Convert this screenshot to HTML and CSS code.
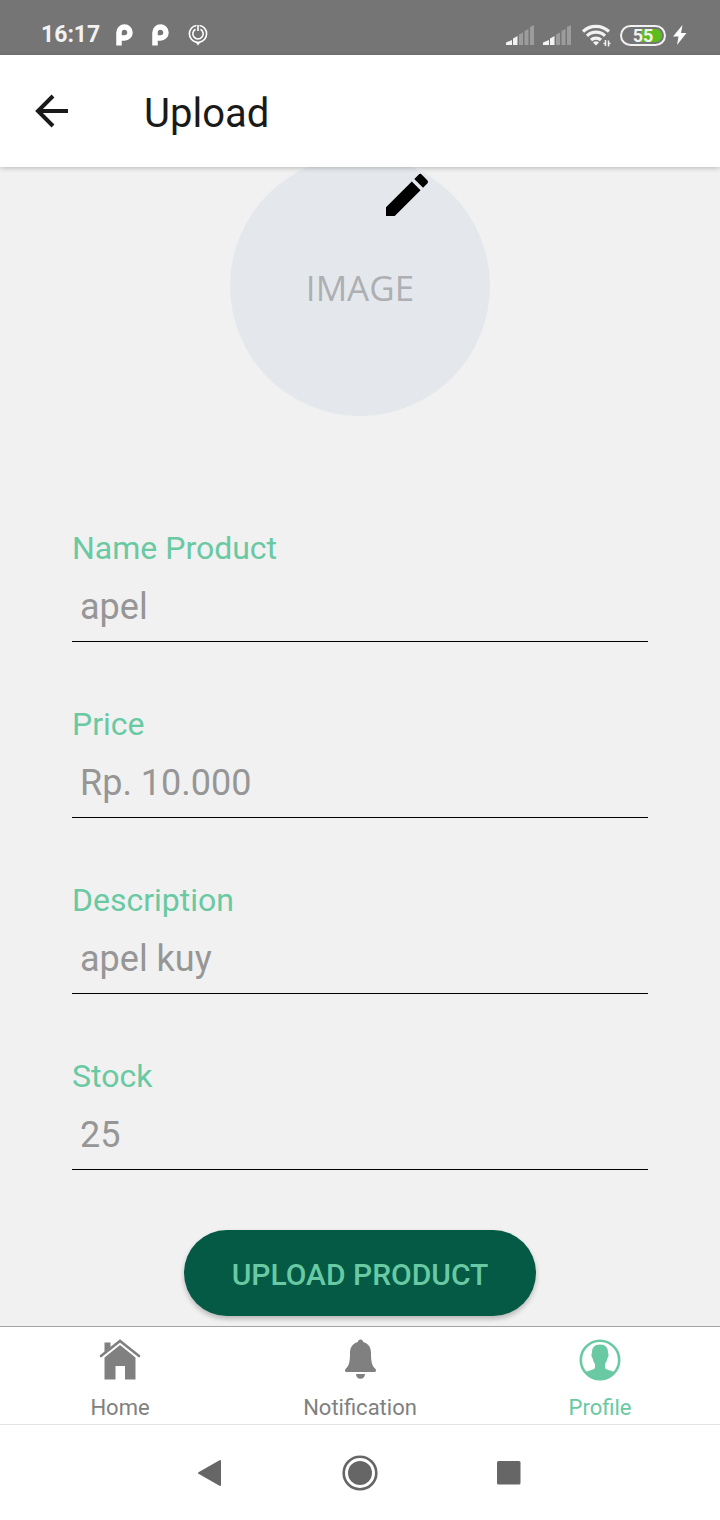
FILE: index.html
```html
<!DOCTYPE html>
<html lang="en">
<head>
<meta charset="utf-8">
<meta name="viewport" content="width=device-width, initial-scale=1">
<title>Upload</title>
<link rel="stylesheet" href="styles.css">
</head>
<body>
<div class="app">
  <div class="status">
    <div class="status-left">
      <time class="clock">16:17</time>
      <svg class="app-mark" width="17" height="22" viewBox="0 0 17 22" aria-hidden="true"><path d="M3 21.500V8.500a5.500 5.500 0 1 1 5.500 5.500H5" fill="none" stroke="#fff" stroke-width="5.500"/></svg>
      <svg class="app-mark" width="17" height="22" viewBox="0 0 17 22" aria-hidden="true"><path d="M3 21.500V8.500a5.500 5.500 0 1 1 5.500 5.500H5" fill="none" stroke="#fff" stroke-width="5.500"/></svg>
      <svg width="20" height="22" viewBox="0 0 20 22" aria-hidden="true"><g fill="none" stroke="#fff" stroke-width="1.600"><path d="M8.500 1.500a8.400 8.400 0 0 0 0 16.600M11.500 1.500a8.400 8.400 0 0 1 0 16.600"/><path d="M7.500 5.200a5.200 5.200 0 1 0 5 0"/><path d="M10 1v6"/></g><path d="M7 17.500h6L10 21.500z" fill="#fff"/></svg>
    </div>
    <div class="status-right">
      <svg width="28" height="20" viewBox="0 0 28 20" aria-hidden="true"><path d="M0 20v-2.500L6 15v5zM7 20v-6.500L11.500 11V20z" fill="#f2f2f2"/><path d="M13 20V9.500L17 7.500V20zM18.500 20V6L22.500 4V20zM24 20V2l4-2V20z" fill="#9c9c9c"/></svg>
      <svg width="28" height="20" viewBox="0 0 28 20" aria-hidden="true"><path d="M0 20v-2.500L6 15v5zM7 20v-6.500L11.500 11V20z" fill="#f2f2f2"/><path d="M13 20V9.500L17 7.500V20zM18.500 20V6L22.500 4V20zM24 20V2l4-2V20z" fill="#9c9c9c"/></svg>
      <svg class="wifi" width="29" height="24" viewBox="0 0 29 24" aria-hidden="true"><g fill="none" stroke="#f2f2f2" stroke-width="3.200"><path d="M1 8.500a19 19 0 0 1 26 0"/><path d="M5 12.800a13 13 0 0 1 18 0"/><path d="M9 17a7.500 7.500 0 0 1 10 0"/></g><path d="M14 22.500l-3-3a4 4 0 0 1 6 0z" fill="#f2f2f2"/><path d="M23.500 17V23M26.500 17.500v6M21.500 20.500h2M26.500 20.500h2" stroke="#f2f2f2" stroke-width="1.500"/></svg>
      <div class="battery"><span class="battery-level"></span><span class="battery-text">55</span></div>
      <svg width="14" height="20" viewBox="0 0 14 20" aria-hidden="true"><path d="M9.500 0L0 11.500h5.500L4 20 13.500 8H8z" fill="#fff"/></svg>
    </div>
  </div>

  <header class="header">
    <button class="back" type="button" aria-label="Back"><svg width="34" height="34" viewBox="0 0 34 34"><path d="M18 2L3 17l15 15M3 17h30" fill="none" stroke="#1a1a1a" stroke-width="4"/></svg></button>
    <h1 class="title">Upload</h1>
  </header>

  <main class="content">
    <div class="avatar">
      <span class="avatar-text">IMAGE</span>
      <button class="edit" type="button" aria-label="Edit image"><svg width="56" height="56" viewBox="0 0 24 24"><path d="M3 17.250V21h3.750L17.810 9.940l-3.750-3.750L3 17.250zM20.710 7.040a1 1 0 0 0 0-1.410l-2.340-2.340a1 1 0 0 0-1.410 0l-1.830 1.830 3.750 3.750 1.830-1.830z"/></svg></button>
    </div>
    <form class="form">
      <div class="field"><label for="name">Name Product</label><input id="name" type="text" placeholder="apel"></div>
      <div class="field"><label for="price">Price</label><input id="price" type="text" placeholder="Rp. 10.000"></div>
      <div class="field"><label for="description">Description</label><input id="description" type="text" placeholder="apel kuy"></div>
      <div class="field"><label for="stock">Stock</label><input id="stock" type="text" placeholder="25"></div>
      <button class="submit" type="button">UPLOAD PRODUCT</button>
    </form>
  </main>

  <nav class="tabs">
    <a class="tab" href="#home"><svg width="42" height="42" viewBox="0 0 42 42" aria-hidden="true"><path d="M5.500 13V3.500h6V8z"/><path d="M2 17L21 2l19 15" fill="none" stroke="currentColor" stroke-width="2.600" stroke-linecap="round"/><path d="M5.500 18.500L21 6l15.500 12.500v22H26V27H16.500v13.500h-11z"/></svg><span>Home</span></a>
    <a class="tab" href="#notification"><svg width="42" height="42" viewBox="0 0 42 42" aria-hidden="true"><path d="M21.500 .5c1.600 0 2.500 1 2.700 2.400C30 4.500 32 9 32 14c0 9 1 13 4.500 16 1 1.300.5 3-1 3H7.500c-1.500 0-2-1.700-1-3C10 27 11 23 11 14c0-5 2-9.500 7.800-11.100C19 1.500 19.900.5 21.500 .5zM17 35h9c0 3-2 4.700-4.500 4.700S17 38 17 35z"/></svg><span>Notification</span></a>
    <a class="tab active" href="#profile"><svg width="42" height="42" viewBox="0 0 42 42" aria-hidden="true"><circle cx="21" cy="21" r="19.200" fill="none" stroke="currentColor" stroke-width="2.600"/><path d="M21 5.500c5.500 0 8.200 3 8 8.500.8.500.8 4-.7 5.500-.4 2.500-1.300 4-2.300 5.500v4c1.500 2 6 2.500 9.500 4C32 38 27 41 21 41S10 38 6.500 33c3.500-1.500 8-2 9.500-4v-4c-1-1.500-1.900-3-2.300-5.500-1.500-1.500-1.500-5-.7-5.500-.2-5.500 2.500-8.500 8-8.500z"/></svg><span>Profile</span></a>
  </nav>

  <div class="system">
    <button type="button" aria-label="Back"><svg width="36" height="36" viewBox="0 0 36 36"><path d="M6 18L27 6v24z" fill="#666" stroke="#666" stroke-width="2" stroke-linejoin="round"/></svg></button>
    <button type="button" aria-label="Home"><svg width="36" height="36" viewBox="0 0 36 36"><circle cx="18" cy="18" r="16.300" fill="none" stroke="#666" stroke-width="2.600"/><circle cx="18" cy="18" r="12" fill="#666"/></svg></button>
    <button type="button" aria-label="Recent apps"><svg width="36" height="36" viewBox="0 0 36 36"><rect x="6" y="6" width="23.500" height="23.500" rx="1.500" fill="#666"/></svg></button>
  </div>
</div>
</body>
</html>
```
FILE: styles.css
```css
* { box-sizing: border-box; }

body {
  margin: 0;
  font-family: Roboto, "Noto Sans", sans-serif;
  background: #f1f1f1;
}

button {
  font: inherit;
  border: 0;
  padding: 0;
  background: none;
}

svg { display: block; flex: none; }

.app {
  display: flex;
  flex-direction: column;
  min-height: 100vh;
}

.status {
  display: flex;
  justify-content: space-between;
  height: 55px;
  padding: 14px 33px 0 41px;
  background: #757575;
  color: #f2f2f2;
}

.status-left,
.status-right {
  display: flex;
  align-items: center;
  height: 42px;
}

.status-left { gap: 16px; }
.status-right { gap: 9px; }
.app-mark { margin-right: 3px; }
.clock { font-size: 23px; font-weight: 700; line-height: 42px; }
.wifi { margin-left: 2px; }

.battery {
  position: relative;
  width: 46px;
  height: 21px;
  margin-right: -2px;
  border: 2px solid #f2f2f2;
  border-radius: 11px;
  text-align: center;
}

.battery-level {
  position: absolute;
  inset: 2px 2px 2px 19px;
  border-radius: 0 7px 7px 0;
  background: #5bbd1e;
}

.battery-text {
  position: relative;
  display: block;
  font-size: 18px;
  font-weight: 700;
  line-height: 17px;
}

.header {
  position: relative;
  z-index: 1;
  display: flex;
  align-items: center;
  gap: 75px;
  height: 112px;
  padding: 0 35px;
  background: #fff;
  box-shadow: 0 1px 5px rgba(0, 0, 0, 0.24);
}

.title {
  margin: 0;
  padding-top: 6px;
  font-size: 40px;
  font-weight: 400;
  line-height: 48px;
  color: #1a1a1a;
}

.content {
  flex: 1;
  padding: 0 72px 10px;
  overflow: hidden;
}

.avatar {
  position: relative;
  display: grid;
  place-items: center;
  width: 260px;
  height: 260px;
  margin: -11px auto 112px;
  border-radius: 50%;
  background: #e4e8ed;
}

.avatar-text {
  padding-top: 4px;
  font-family: "Open Sans", sans-serif;
  font-size: 35px;
  line-height: 40px;
  color: #adafb2;
}

.edit {
  position: absolute;
  top: 11px;
  right: 55px;
}

.form {
  display: flex;
  flex-direction: column;
  gap: 62px;
}

.field {
  display: flex;
  flex-direction: column;
}

.field label {
  font-size: 32px;
  line-height: 40px;
  color: #69c9a2;
}

.field input {
  width: 100%;
  height: 74px;
  padding: 4px 8px 0;
  border: 0;
  border-bottom: 1px solid #000;
  border-radius: 0;
  outline: 0;
  background: none;
  font: inherit;
  font-size: 36px;
  color: #333;
}

.field input::placeholder { color: #969696; opacity: 1; }

.submit {
  align-self: center;
  height: 86px;
  margin-top: -2px;
  padding: 2px 48px 0;
  border-radius: 43px;
  background: #045a44;
  box-shadow: 0 3px 5px rgba(0, 0, 0, 0.24);
  font-size: 30px;
  font-weight: 500;
  color: #69c9a2;
}

.tabs {
  display: grid;
  grid-template-columns: repeat(3, 1fr);
  height: 98px;
  border-top: 1px solid #a3a3a3;
  background: #fff;
}

.tab {
  display: flex;
  flex-direction: column;
  align-items: center;
  gap: 13px;
  padding-top: 12px;
  font-size: 22px;
  line-height: 28px;
  color: #808080;
  fill: currentColor;
  text-decoration: none;
}

.tab.active { color: #69c9a2; }

.system {
  display: flex;
  align-items: center;
  justify-content: center;
  gap: 113px;
  height: 96px;
  padding-right: 1px;
  border-top: 1px solid #e3e3e3;
  background: #fff;
}
```
